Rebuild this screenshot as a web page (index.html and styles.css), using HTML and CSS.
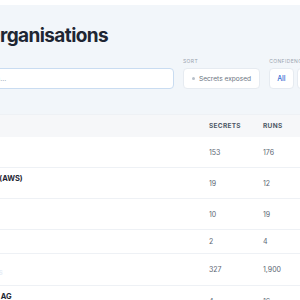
FILE: index.html
```html
<!DOCTYPE html>
<html lang="en">

<head>
    <meta charset="UTF-8">
    <meta name="viewport" content="width=device-width, initial-scale=1.0">
    <title>Organisations</title>
    <link rel="stylesheet" href="styles.css">
</head>

<body>
    <div class="page">
        <div class="header">
            <h1>Organisations</h1>

            <div class="filters">
                <input class="search" type="text" placeholder="Search…">

                <div class="filter-group">
                    <span class="filter-label">Sort</span>
                    <button class="sort-btn"><span class="dot"></span>Secrets exposed</button>
                </div>

                <div class="filter-group">
                    <span class="filter-label">Confidence</span>
                    <div class="segments">
                        <button class="seg active">All</button>
                        <button class="seg">High</button>
                        <button class="seg">Medium</button>
                    </div>
                </div>
            </div>
        </div>

        <!-- таблица прокручена по горизонтали -->
        <div class="table">
            <div class="row head">
                <div class="cell name-head">Organisation</div>
                <div class="cell">Secrets</div>
                <div class="cell">Runs</div>
                <div class="cell">Last seen</div>
            </div>

            <div class="row">
                <div class="cell name">
                    <strong>Acme Cloud Services</strong>
                    <span class="sub">acme-cloud</span>
                </div>
                <div class="cell num">153</div>
                <div class="cell num">176</div>
                <div class="cell num">2d</div>
            </div>

            <div class="row">
                <div class="cell name">
                    <strong>Amazon Web Services (AWS)</strong>
                    <span class="sub">aws</span>
                </div>
                <div class="cell num">19</div>
                <div class="cell num">12</div>
                <div class="cell num">5d</div>
            </div>

            <div class="row">
                <div class="cell name">
                    <strong>Northwind Labs</strong>
                    <span class="sub">northwind</span>
                </div>
                <div class="cell num">10</div>
                <div class="cell num">19</div>
                <div class="cell num">1w</div>
            </div>

            <div class="row single">
                <div class="cell name">
                    <strong>Globex</strong>
                </div>
                <div class="cell num">2</div>
                <div class="cell num">4</div>
                <div class="cell num">3w</div>
            </div>

            <div class="row tall">
                <div class="cell name">
                    <strong>Initech Platform</strong>
                    <span class="sub faint">INITECH-PLATFORM-DEVOPS</span>
                </div>
                <div class="cell num">327</div>
                <div class="cell num">1,900</div>
                <div class="cell num">1d</div>
            </div>

            <div class="row">
                <div class="cell name">
                    <strong>Umbrella Technologies AG</strong>
                    <span class="sub">umbrella</span>
                </div>
                <div class="cell num">4</div>
                <div class="cell num">16</div>
                <div class="cell num">2w</div>
            </div>
        </div>
    </div>
</body>

</html>
```

FILE: styles.css
```css
body {
    margin: 0;
    background-color: #fff;
    font-family: Inter, "Noto Sans", sans-serif;
    color: #1f2937;
    overflow: hidden;
}

.page {
    width: 420px;
    margin-left: -40px;
    padding-top: 5px;
}

.header {
    background-color: #f2f6fa;
    padding: 19px 0 25px;
}

h1 {
    margin: 0 0 0 26px;
    font-size: 19px;
    line-height: 24px;
    font-weight: 700;
    letter-spacing: -0.6px;
    color: #1e2633;
}

.filters {
    display: flex;
    align-items: flex-end;
    gap: 9px;
    margin-top: 10px;
}

.search {
    width: 214px;
    height: 21px;
    box-sizing: border-box;
    padding: 0 8px 0 16px;
    border: 1px solid #c9dcf1;
    border-radius: 4px;
    background-color: #fff;
    font-family: inherit;
    font-size: 7px;
}

.search::placeholder {
    color: #a3abb6;
}

.filter-group {
    display: flex;
    flex-direction: column;
    gap: 3px;
}

.filter-label {
    font-size: 5px;
    line-height: 7px;
    letter-spacing: 0.4px;
    text-transform: uppercase;
    color: #9aa3ae;
}

button {
    font-family: inherit;
    cursor: pointer;
    white-space: nowrap;
}

.sort-btn {
    display: flex;
    align-items: center;
    gap: 4px;
    height: 21px;
    padding: 0 8px;
    border: 1px solid #e6ebf1;
    border-radius: 4px;
    background-color: #fff;
    font-size: 6.6px;
    color: #6b7480;
}

.dot {
    width: 3px;
    height: 3px;
    border-radius: 50%;
    background-color: #b8c0ca;
}

.segments {
    display: flex;
    gap: 3px;
}

.seg {
    height: 21px;
    padding: 0 7px;
    border: 1px solid #e6ebf1;
    border-radius: 4px;
    background-color: #fff;
    font-size: 7px;
    color: #6b7480;
}

.seg.active {
    color: #3b6fd4;
    font-weight: 500;
}

.table {
    margin-left: -60px;
}

.row {
    display: grid;
    grid-template-columns: 309px 54px 54px 1fr;
    align-items: center;
    border-bottom: 1px solid #eef1f5;
}

.row.head {
    height: 22px;
    background-color: #f6f7f9;
    border-top: 1px solid #eef1f5;
    border-bottom: none;
    font-size: 6.5px;
    font-weight: 700;
    letter-spacing: 0.3px;
    text-transform: uppercase;
    color: #4e5866;
}

.name-head {
    padding-left: 15px;
}

.name {
    display: flex;
    flex-direction: column;
    align-items: flex-start;
    padding: 7px 0 7px 15px;
    white-space: nowrap;
    overflow: hidden;
}

.row.single .name {
    padding-bottom: 8px;
}

.row.tall .name {
    padding-bottom: 8px;
}

.name strong {
    font-size: 7.5px;
    line-height: 8px;
    color: #1e2633;
}

.sub {
    font-size: 6px;
    line-height: 8px;
    color: #9aa3ae;
}

.sub.faint {
    color: #e8eef6;
    font-weight: 700;
}

.num {
    font-size: 7px;
    color: #5b6572;
}
```
